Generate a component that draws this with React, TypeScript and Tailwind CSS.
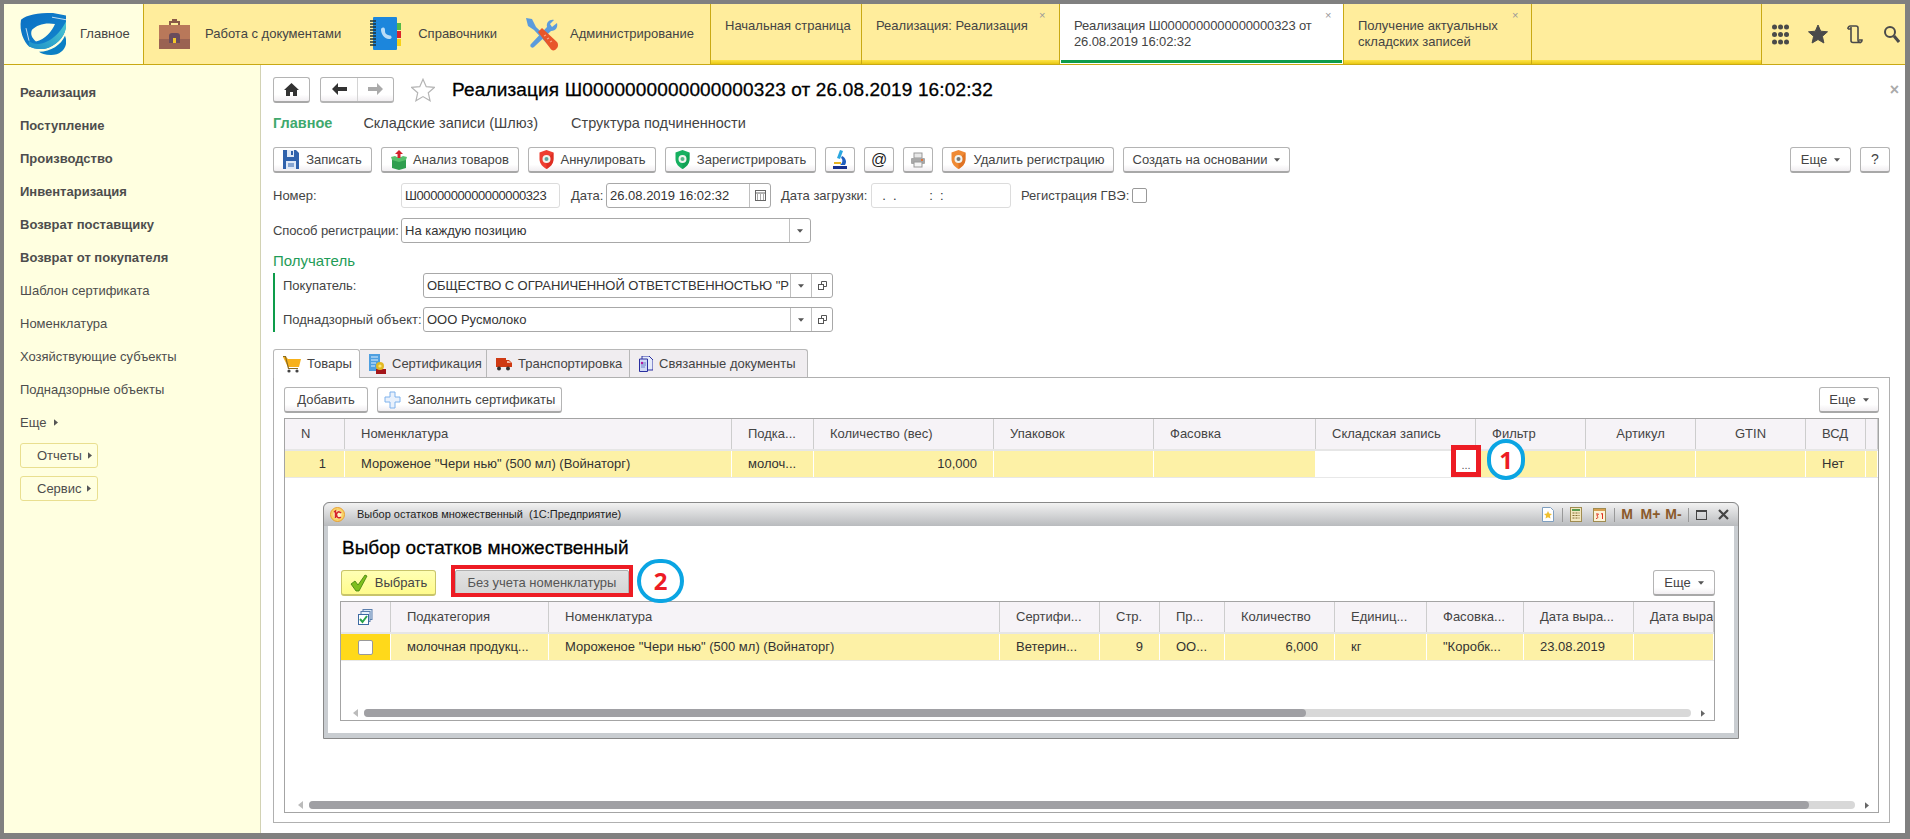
import React from "react";

const Tri = ({ right = false, c = "#555" }: { right?: boolean; c?: string }) =>
  right ? (
    <svg width="4" height="7" viewBox="0 0 5 8" className="shrink-0"><path d="M0 0l5 4-5 4z" fill={c} /></svg>
  ) : (
    <svg width="6" height="4" viewBox="0 0 7 4" className="shrink-0"><path d="M0 0h7L3.5 4z" fill={c} /></svg>
  );

const Logo = () => (
  <svg width="47" height="42" viewBox="0 0 47 50" preserveAspectRatio="none">
    <defs>
      <linearGradient id="lg1" x1="0" y1="0" x2="1" y2="1"><stop offset="0" stopColor="#0a6fc4" /><stop offset="1" stopColor="#1487cc" /></linearGradient>
      <linearGradient id="lg2" x1="0" y1="1" x2="1" y2="0"><stop offset="0" stopColor="#1e90c8" /><stop offset="1" stopColor="#4cc8d2" /></linearGradient>
    </defs>
    <path fillRule="evenodd" d="M2 8C8 2 18 0 34 0l13 3v11c0 12-7 22-17 27-8 4-16 1-20-1C5 34 0 22 2 8zM13 20c5-6 13-9 23-7-3 9-10 18-19 21-4-4-6-9-4-14z" fill="url(#lg1)" />
    <path d="M10 33c4 5 12 5 18 1 8-5 15-14 19-24v5c0 11-7 21-17 26-8 4-16 1-20-1z" fill="url(#lg2)" />
    <path d="M47 8L33 5M10 33L7 18" stroke="#fff" strokeWidth=".8" fill="none" />
    <path d="M46 27c4 11-2 23-14 23-6 0-10-2-12-4 12 0 22-8 26-19z" fill="#0b7fc4" />
  </svg>
);

const Briefcase = () => (
  <svg width="33" height="33" viewBox="0 0 33 33">
    <path d="M11 7V3h3V1h5v2h3v4h-2V5h-7v2z" fill="#8a5a48" />
    <path d="M1 7h31v14H1z" fill="#b9785a" />
    <path d="M1 21h31v10H1z" fill="#9a6252" />
    <path d="M11 18a3 3 0 013-3h5a3 3 0 013 3v7H11z" fill="#6a4c5c" />
    <rect x="15" y="20" width="3" height="5" fill="#f4c72a" />
  </svg>
);

const Book = () => (
  <svg width="33" height="34" viewBox="0 0 33 34">
    <rect x="3" y="0" width="24" height="33" rx="1" fill="#1c86dc" />
    <path d="M0 4h6M0 7h6M0 10h6M0 13h6M0 16h6M0 19h6M0 22h6M0 25h6M0 28h6" stroke="#233" strokeWidth="1.4" />
    <rect x="27" y="6" width="4" height="7" fill="#54b948" />
    <rect x="27" y="14" width="4" height="7" fill="#d9232e" />
    <rect x="27" y="22" width="4" height="7" fill="#f7d117" />
    <path d="M12 11c2-1 3 0 3 2s0 4 3 5 2 0 3 1 1 3-2 3c-5 0-8-6-8-9 0-1 0-2 1-2z" fill="#b9dcf7" />
  </svg>
);

const Tools = () => (
  <svg width="34" height="34" viewBox="0 0 34 34">
    <path d="M1 1l6 1 4 8 18 17-3 4L9 13 3 9z" fill="#5b9bdc" />
    <path d="M32 6c1 4-1 8-6 8L9 30c-2 2-5-1-3-3l16-17c-1-5 3-8 7-7l-4 4 2 3z" fill="#5b9bdc" />
    <path d="M13 15l4-4 15 14c2 3 1 6-2 8-2 1-4 0-5-2z" fill="#e8562a" />
    <path d="M19 19l2-1M22 22l2-1M25 25l2-1" stroke="#f9a98c" strokeWidth="1.2" />
  </svg>
);

const Floppy = () => (
  <svg width="16" height="19" viewBox="0 0 16 19">
    <path d="M0 0h13l3 3v16H0z" fill="#2f62ac" />
    <rect x="4" y="0" width="7" height="7" fill="#dfe9f7" />
    <rect x="8" y="1" width="2" height="4" fill="#2f62ac" />
    <rect x="3" y="11" width="10" height="8" fill="#dfe9f7" />
    <path d="M5 14h6M5 16h6" stroke="#2f62ac" />
  </svg>
);

const BoxIcon = () => (
  <svg width="16" height="20" viewBox="0 0 16 20">
    <path d="M1 9l7 2 7-2v9l-7 2-7-2z" fill="#2f9e4f" />
    <path d="M0 7l4-1 4 2 4-2 4 1-1 3-7 2-7-2z" fill="#58c06c" />
    <path d="M8 0l4 4H9.5v4h-3V4H4z" fill="#d3202a" />
  </svg>
);

const Shield = ({ a, b, dot }: { a: string; b: string; dot: string }) => (
  <svg width="15" height="19" viewBox="0 0 15 19">
    <path d="M7.500 0l7 2.500V9c0 5-3.500 8-7 10-3.500-2-7-5-7-10V2.500z" fill={a} />
    <path d="M7.500 10L14.500 2.500V9c0 5-3.500 8-7 10z" fill={b} opacity=".7" />
    <circle cx="7.500" cy="9" r="4" fill="#f1f4ee" />
    <circle cx="7.500" cy="9" r="2" fill={dot} />
  </svg>
);

const Microscope = () => (
  <svg width="16" height="20" viewBox="0 0 16 20">
    <path d="M8 0l3 1-3 8-3-1z" fill="#2aa7e0" />
    <path d="M10 6c4 2 5 6 3 9H8c3-2 3-6 1-7z" fill="#1f5fbf" />
    <path d="M2 12h7v2H2z" fill="#e6b422" />
    <path d="M1 16h14v3H1z" fill="#15318f" />
  </svg>
);

const Printer = () => (
  <svg width="16" height="16" viewBox="0 0 16 16">
    <rect x="4" y="1" width="8" height="5" fill="#e8e8e8" stroke="#999" />
    <rect x="1" y="6" width="14" height="6" rx="1" fill="#a8a8a8" />
    <rect x="4" y="10" width="8" height="5" fill="#f4f4f4" stroke="#999" />
    <rect x="11" y="7" width="2" height="2" fill="#e2743a" />
  </svg>
);

const Cart = () => (
  <svg width="18" height="17" viewBox="0 0 18 17">
    <path d="M0 1h3l2 2h13l-2 8H5z" fill="#f7b11a" />
    <path d="M0 0h3l3 12h9v1H5L2 1H0z" fill="#8a6a20" />
    <circle cx="6" cy="15" r="1.600" fill="#444" />
    <circle cx="14" cy="15" r="1.600" fill="#444" />
  </svg>
);

const Cert = () => (
  <svg width="17" height="20" viewBox="0 0 17 20">
    <path d="M0 0h11v17H0z" fill="#4f9fe0" />
    <path d="M2 3h7M2 6h7M2 9h5M2 12h4" stroke="#dff0ff" />
    <rect x="7" y="15" width="10" height="5" fill="#a4161a" />
    <circle cx="11" cy="12" r="4" fill="#e3b923" />
    <circle cx="11" cy="12" r="1.600" fill="#fbe77d" />
  </svg>
);

const Truck = () => (
  <svg width="16" height="14" viewBox="0 0 16 14">
    <rect x="0" y="1" width="10" height="9" fill="#cf3a13" />
    <path d="M10 3h3l3 3v4h-6z" fill="#cf3a13" />
    <path d="M11 4h2l2 2h-4z" fill="#f3b7a0" />
    <circle cx="3" cy="11.500" r="2" fill="#333" />
    <circle cx="12" cy="11.500" r="2" fill="#333" />
  </svg>
);

const Docs = () => (
  <svg width="14" height="16" viewBox="0 0 14 16">
    <path d="M3 0h7l4 4v10H3z" fill="#e6ecfa" stroke="#2a2fa0" />
    <path d="M0.500 3h8v12.500h-8z" fill="#cfd9f5" stroke="#2a2fa0" />
    <path d="M2 7h5M2 9h5M2 11h4" stroke="#6b7fc9" />
    <circle cx="3" cy="7" r="1.200" fill="#b5179e" />
  </svg>
);

const PlusOutline = () => (
  <svg width="17" height="18" viewBox="0 0 17 18">
    <path d="M6 1h5v5h5v5h-5v6H6v-6H1V6h5z" fill="#e9f1fc" stroke="#7fb2ec" strokeLinejoin="round" />
  </svg>
);

const Check = () => (
  <svg width="18" height="18" viewBox="0 0 18 18">
    <path d="M1 10l4-3 3 4 7-10 2 1-8 15H6z" fill="#7fbf1f" stroke="#3e7d0a" strokeWidth=".8" />
  </svg>
);

const CheckStack = () => (
  <svg width="15" height="16" viewBox="0 0 15 16">
    <rect x="5" y="0.500" width="9" height="10" fill="#dbe7f5" stroke="#5b7fae" />
    <rect x="3" y="2.500" width="9" height="10" fill="#eaf1fa" stroke="#5b7fae" />
    <rect x="0.500" y="5.500" width="10" height="10" fill="#fff" stroke="#3d6aa3" />
    <path d="M2 10l2.500 3L9 7" fill="none" stroke="#2aa34a" strokeWidth="2" />
  </svg>
);

const Calendar = () => (
  <svg width="11" height="11" viewBox="0 0 11 11">
    <rect x="0.500" y="0.500" width="10" height="10" fill="#fff" stroke="#666" />
    <path d="M0 3h11" stroke="#666" />
    <path d="M2 5h1M5 5h1M8 5h1M2 7h1M5 7h1M8 7h1M2 9h1M5 9h1M8 9h1" stroke="#555" />
  </svg>
);

const Copy = () => (
  <svg width="9" height="9" viewBox="0 0 9 9">
    <rect x="0.500" y="3.500" width="5" height="5" fill="#fff" stroke="#555" />
    <path d="M3.500 3V0.500h5v5H6" fill="none" stroke="#555" />
  </svg>
);

const GridDots = () => (
  <svg width="17" height="21" viewBox="0 0 17 21">
    {[3, 10.500, 18].map((y) => [2.500, 8.500, 14.500].map((x) => <circle key={`${x}-${y}`} cx={x} cy={y} r="2.500" fill="#4a4a4a" />))}
  </svg>
);

const Star = ({ fill, stroke, size = 20 }: { fill: string; stroke: string; size?: number }) => (
  <svg width={size} height={size} viewBox="0 0 20 20">
    <path d="M10 1l2.700 6.200 6.800.6-5.100 4.500 1.500 6.700L10 15.500 4.100 19l1.500-6.700L.5 7.800l6.800-.6z" fill={fill} stroke={stroke} />
  </svg>
);

const Scroll = () => (
  <svg width="16" height="19" viewBox="0 0 16 19" fill="none" stroke="#4a4a4a" strokeWidth="1.600">
    <path d="M1 4a2.500 2.500 0 012.500-3H9a2 2 0 012 2v12a2.500 2.500 0 002.500 2.500A2.500 2.500 0 0015 15h-3" />
    <path d="M1 4h3M13.500 17.500H6a2 2 0 01-2-2V2" />
  </svg>
);

const Search = () => (
  <svg width="17" height="18" viewBox="0 0 17 18">
    <circle cx="7" cy="7" r="5" fill="none" stroke="#4a4a4a" strokeWidth="2" />
    <path d="M11 11l5 6" stroke="#4a4a4a" strokeWidth="3" />
  </svg>
);

const Logo1C = () => (
  <svg width="15" height="15" viewBox="0 0 15 15">
    <circle cx="7.500" cy="7.500" r="7" fill="#f9d36a" stroke="#e8a030" />
    <circle cx="7.500" cy="7.500" r="4" fill="#fff3c4" />
    <path d="M4 5l1.500-1v7M11 6a2.500 3 0 10-.2 4" fill="none" stroke="#d4232a" strokeWidth="1.500" />
  </svg>
);

const Btn = ({ w, children, center = true }: { w: string; children: React.ReactNode; center?: boolean }) => (
  <button className={`${w} h-[26px] shrink-0 flex items-center ${center ? "justify-center" : ""} rounded-[3px] border border-[#b4b4b4] border-b-[2px] border-b-[#a8a8a8] bg-gradient-to-b from-white from-[72%] to-[#f1eef1] text-[13px] text-[#444]`}>
    {children}
  </button>
);

const Fld = ({ w, v, light = false, cls = "", children }: { w: string; v?: string; light?: boolean; cls?: string; children?: React.ReactNode }) => (
  <div className={`${w} h-[25px] shrink-0 flex items-center rounded-[3px] border ${light ? "border-[#dcdcdc]" : "border-[#a8a8a8]"} bg-white text-[13px] text-[#333]`}>
    <div className={`flex-1 min-w-0 pl-[3px] whitespace-pre overflow-hidden ${cls}`}>{v}</div>
    {children}
  </div>
);

const Sep = ({ w, children }: { w: string; children: React.ReactNode }) => (
  <div className={`${w} h-full shrink-0 flex items-center justify-center border-l border-[#c0c0c0]`}>{children}</div>
);

const mainCols = [
  { w: "w-[60px]", h: "N", hc: "pl-[16px]", r: "1", rc: "justify-end pr-[18px]" },
  { w: "w-[387px]", h: "Номенклатура", hc: "pl-[16px]", r: 'Мороженое "Чери нью" (500 мл) (Войнаторг)', rc: "pl-[16px]" },
  { w: "w-[82px]", h: "Подка...", hc: "pl-[16px]", r: "молоч...", rc: "pl-[16px]" },
  { w: "w-[180px]", h: "Количество (вес)", hc: "pl-[16px]", r: "10,000", rc: "justify-end pr-[16px]" },
  { w: "w-[160px]", h: "Упаковок", hc: "pl-[16px]", r: "", rc: "" },
  { w: "w-[162px]", h: "Фасовка", hc: "pl-[16px]", r: "", rc: "" },
  { w: "w-[160px]", h: "Складская запись", hc: "pl-[16px]", r: "", rc: "bg-white" },
  { w: "w-[110px]", h: "Фильтр", hc: "pl-[16px]", r: "", rc: "" },
  { w: "w-[110px]", h: "Артикул", hc: "justify-center", r: "", rc: "" },
  { w: "w-[110px]", h: "GTIN", hc: "justify-center", r: "", rc: "" },
  { w: "w-[60px]", h: "ВСД", hc: "pl-[16px]", r: "Нет", rc: "pl-[16px]" },
  { w: "flex-1", h: "", hc: "", r: "", rc: "" },
];

const winCols = [
  { w: "w-[50px]", h: "", hc: "justify-center", r: "", rc: "bg-[#ffd91a] justify-center" },
  { w: "w-[158px]", h: "Подкатегория", hc: "pl-[16px]", r: "молочная продукц...", rc: "pl-[16px]" },
  { w: "w-[451px]", h: "Номенклатура", hc: "pl-[16px]", r: 'Мороженое "Чери нью" (500 мл) (Войнаторг)', rc: "pl-[16px]" },
  { w: "w-[100px]", h: "Сертифи...", hc: "pl-[16px]", r: "Ветерин...", rc: "pl-[16px]" },
  { w: "w-[60px]", h: "Стр.", hc: "pl-[16px]", r: "9", rc: "justify-end pr-[16px]" },
  { w: "w-[65px]", h: "Пр...", hc: "pl-[16px]", r: "ОО...", rc: "pl-[16px]" },
  { w: "w-[110px]", h: "Количество", hc: "pl-[16px]", r: "6,000", rc: "justify-end pr-[16px]" },
  { w: "w-[92px]", h: "Единиц...", hc: "pl-[16px]", r: "кг", rc: "pl-[16px]" },
  { w: "w-[97px]", h: "Фасовка...", hc: "pl-[16px]", r: '"Коробк...', rc: "pl-[16px]" },
  { w: "w-[110px]", h: "Дата выра...", hc: "pl-[16px]", r: "23.08.2019", rc: "pl-[16px]" },
  { w: "flex-1", h: "Дата выра", hc: "pl-[16px]", r: "", rc: "" },
];

type Col = { w: string; h: string; hc: string; r: string; rc: string };

const Table = ({ cols, extra, rowIcon, headIcon }: { cols: Col[]; extra: string; rowIcon?: React.ReactNode; headIcon?: React.ReactNode }) => (
  <div className={`${extra} flex flex-col border border-[#a4a4a4] bg-white text-[13px] text-[#444] overflow-hidden`}>
    <div className="h-[30px] flex bg-[#f6f3f7] border-b-0 shrink-0">
      {cols.map((c, i) => (
        <div key={i} className={`${c.w} ${c.hc} min-w-0 flex items-center whitespace-nowrap overflow-hidden border-r border-[#cdcdcd]`}>
          {i === 0 && headIcon ? headIcon : c.h}
        </div>
      ))}
    </div>
    <div className="h-[2px] shrink-0 bg-[#e6e6e6]" />
    <div className="h-[26px] flex bg-[#fdf1a6] shrink-0 text-[#333]">
      {cols.map((c, i) => (
        <div key={i} className={`${c.w} ${c.rc} min-w-0 flex items-center whitespace-nowrap overflow-hidden border-r border-white`}>
          {i === 0 && rowIcon ? rowIcon : c.r}
        </div>
      ))}
    </div>
    <div className="h-[1px] shrink-0 bg-[#e8e8e8]" />
    <div className="flex-1" />
  </div>
);

const HBar = ({ pad, thumb, outer }: { pad: string; thumb: string; outer: string }) => (
  <div className={`${outer} flex items-center`}>
    <div className={`${pad} flex items-center justify-end pr-[6px]`}>
      <svg width="5" height="8" viewBox="0 0 5 8"><path d="M5 0L0 4l5 4z" fill="#bbb" /></svg>
    </div>
    <div className="flex-1 h-[8px] rounded-full bg-[#d8d8d8]">
      <div className={`${thumb} h-full rounded-full bg-[#a0a0a4]`} />
    </div>
    <div className="w-[23px] flex justify-center"><Tri right c="#666" /></div>
  </div>
);

export default function App() {
  return (
    <div className="relative w-[1910px] h-[839px] overflow-hidden bg-[#808080] pt-[4px] pl-[4px] pr-[5px] pb-[6px] flex flex-col font-['Liberation_Sans',Arial,sans-serif] text-[13px] text-[#444]">
      {/* Top bar */}
      <div className="h-[61px] shrink-0 flex border-b border-[#c9a914] bg-[#ffed9c]">
        <div className="w-[140px] shrink-0 flex items-center bg-[#ffffe0] border-r border-[#c9a914] pl-[15px]">
          <Logo />
          <span className="ml-[14px] text-[#444]">Главное</span>
        </div>
        <div className="w-[567px] shrink-0 flex items-center pl-[14px] border-r border-[#c9a914]">
          <Briefcase />
          <span className="ml-[14px] whitespace-nowrap">Работа с документами</span>
          <div className="ml-[29px]"><Book /></div>
          <span className="ml-[15px] whitespace-nowrap">Справочники</span>
          <div className="ml-[28px]"><Tools /></div>
          <span className="ml-[11px] whitespace-nowrap">Администрирование</span>
        </div>
        <div className="w-[151px] shrink-0 relative border-r border-[#c9a914] pl-[14px] pt-[14px] leading-[16px] whitespace-nowrap">
          Начальная страница
          <div className="absolute left-0 right-0 bottom-0 h-[4px] bg-gradient-to-b from-[#ffe343] to-[#e8c80c]" />
        </div>
        <div className="w-[198px] shrink-0 relative border-r border-[#c9a914] pl-[14px] pt-[14px] leading-[16px] whitespace-nowrap">
          Реализация: Реализация
          <span className="absolute left-[177px] top-[5px] text-[11px] leading-[12px] text-[#999]">×</span>
          <div className="absolute left-0 right-0 bottom-0 h-[4px] bg-gradient-to-b from-[#ffe343] to-[#e8c80c]" />
        </div>
        <div className="w-[284px] shrink-0 relative bg-white border-r border-[#c9a914] pl-[14px] pt-[14px] leading-[16px]">
          <div className="w-[250px] tracking-[-0.12px]">Реализация Ш0000000000000000323 от 26.08.2019 16:02:32</div>
          <span className="absolute left-[265px] top-[5px] text-[11px] leading-[12px] text-[#999]">×</span>
          <div className="absolute left-[1px] right-[1px] bottom-[1px] h-[3px] bg-[#0d9c4a]" />
        </div>
        <div className="w-[188px] shrink-0 relative border-r border-[#c9a914] pl-[14px] pt-[14px] leading-[16px]">
          <div className="w-[160px]">Получение актуальных складских записей</div>
          <span className="absolute left-[168px] top-[5px] text-[11px] leading-[12px] text-[#999]">×</span>
          <div className="absolute left-0 right-0 bottom-0 h-[4px] bg-gradient-to-b from-[#ffe343] to-[#e8c80c]" />
        </div>
        <div className="w-[230px] shrink-0 relative border-r border-[#c9a914]">
          <div className="absolute left-0 right-0 bottom-0 h-[4px] bg-gradient-to-b from-[#ffe343] to-[#e8c80c]" />
        </div>
        <div className="flex-1 flex items-center">
          <div className="w-[37px] flex justify-center"><GridDots /></div>
          <div className="w-[37px] flex justify-center"><Star fill="#4a4a4a" stroke="#4a4a4a" /></div>
          <div className="w-[37px] flex justify-center"><Scroll /></div>
          <div className="w-[37px] flex justify-center"><Search /></div>
        </div>
      </div>

      <div className="flex-1 flex min-h-0">
        {/* Sidebar */}
        <div className="w-[257px] shrink-0 bg-[#ffffe0] border-r border-[#d2d2b4] pt-[11px] pl-[16px]">
          {["Реализация", "Поступление", "Производство", "Инвентаризация", "Возврат поставщику", "Возврат от покупателя"].map((t) => (
            <div key={t} className="h-[33px] flex items-center font-bold text-[#4d4d4d]">{t}</div>
          ))}
          {["Шаблон сертификата", "Номенклатура", "Хозяйствующие субъекты", "Поднадзорные объекты"].map((t) => (
            <div key={t} className="h-[33px] flex items-center text-[#4d4d4d]">{t}</div>
          ))}
          <div className="h-[33px] flex items-center gap-[8px] text-[#4d4d4d]">Еще <Tri right /></div>
          <div className="mt-[4px] w-[78px] h-[25px] flex items-center pl-[16px] gap-[6px] border border-[#e9df90] rounded-[3px] text-[#4d4d4d]">Отчеты <Tri right /></div>
          <div className="mt-[8px] w-[78px] h-[25px] flex items-center pl-[16px] gap-[5px] border border-[#e9df90] rounded-[3px] text-[#4d4d4d]">Сервис <Tri right /></div>
        </div>

        {/* Main */}
        <div className="flex-1 min-w-0 flex flex-col bg-white pl-[12px] pr-[15px]">
          <div className="mt-[12px] h-[25px] shrink-0 flex items-center">
            <Btn w="w-[37px]">
              <svg width="15" height="13" viewBox="0 0 15 13"><path d="M7.500 0L15 7h-2v6H9V9H6v4H2V7H0z" fill="#333" /></svg>
            </Btn>
            <div className="ml-[10px] w-[74px] h-[26px] flex rounded-[3px] border border-[#b4b4b4] border-b-[2px] bg-gradient-to-b from-white from-[72%] to-[#f1eef1]">
              <div className="w-[37px] flex items-center justify-center border-r border-[#d4d4d4]">
                <svg width="15" height="12" viewBox="0 0 15 12"><path d="M6 0v4h9v4H6v4L0 6z" fill="#333" /></svg>
              </div>
              <div className="flex-1 flex items-center justify-center">
                <svg width="15" height="12" viewBox="0 0 15 12"><path d="M9 0v4H0v4h9v4l6-6z" fill="#aaa" /></svg>
              </div>
            </div>
            <div className="ml-[17px]"><Star fill="#fff" stroke="#b4b4b4" size={24} /></div>
            <div className="ml-[17px] mt-[2px] text-[19px] tracking-[0.15px] text-black whitespace-nowrap [-webkit-text-stroke:0.3px_black]">Реализация Ш0000000000000000323 от 26.08.2019 16:02:32</div>
            <div className="ml-auto mr-[-9px] text-[16px] font-bold leading-none text-[#aaa]">×</div>
          </div>

          <div className="mt-[12px] h-[20px] shrink-0 flex items-center text-[14.5px]">
            <span className="font-bold text-[#3fa96d]">Главное</span>
            <span className="ml-[31px]">Складские записи (Шлюз)</span>
            <span className="ml-[33px]">Структура подчиненности</span>
          </div>

          <div className="mt-[13px] h-[26px] shrink-0 flex gap-[9px]">
            <Btn w="w-[99px]"><Floppy /><span className="ml-[7px]">Записать</span></Btn>
            <Btn w="w-[138px]"><BoxIcon /><span className="ml-[6px]">Анализ товаров</span></Btn>
            <Btn w="w-[128px]"><Shield a="#ee3e31" b="#d7281e" dot="#5fa6a0" /><span className="ml-[7px]">Аннулировать</span></Btn>
            <Btn w="w-[151px]"><Shield a="#16b060" b="#0e9c50" dot="#54b787" /><span className="ml-[7px]">Зарегистрировать</span></Btn>
            <Btn w="w-[30px]"><Microscope /></Btn>
            <Btn w="w-[30px]"><span className="text-[16px] text-[#222]">@</span></Btn>
            <Btn w="w-[30px]"><Printer /></Btn>
            <Btn w="w-[172px]"><Shield a="#ef8a34" b="#d9691e" dot="#777" /><span className="ml-[7px]">Удалить регистрацию</span></Btn>
            <Btn w="w-[167px]"><span>Создать на основании</span><span className="ml-[7px]"><Tri /></span></Btn>
            <div className="ml-auto flex gap-[9px] mr-[0px]">
              <Btn w="w-[61px]"><span>Еще</span><span className="ml-[7px]"><Tri /></span></Btn>
              <Btn w="w-[30px]"><span className="text-[14px]">?</span></Btn>
            </div>
          </div>

          <div className="mt-[10px] h-[25px] shrink-0 flex items-center">
            <span className="w-[128px] shrink-0">Номер:</span>
            <Fld w="w-[159px]" v="Ш0000000000000000323" light cls="tracking-[-0.4px]" />
            <span className="ml-[11px] w-[35px] shrink-0">Дата:</span>
            <Fld w="w-[165px]" v="26.08.2019 16:02:32"><Sep w="w-[21px]"><Calendar /></Sep></Fld>
            <span className="ml-[10px] w-[90px] shrink-0 whitespace-nowrap">Дата загрузки:</span>
            <Fld w="w-[140px]" v="  .  .         :  :" light />
            <span className="ml-[10px] w-[111px] shrink-0 whitespace-nowrap">Регистрация ГВЭ:</span>
            <div className="w-[15px] h-[15px] rounded-[2px] border border-[#999] bg-white" />
          </div>

          <div className="mt-[10px] h-[25px] shrink-0 flex items-center">
            <span className="w-[128px] shrink-0 whitespace-nowrap tracking-[-0.1px]">Способ регистрации:</span>
            <Fld w="w-[410px]" v="На каждую позицию"><Sep w="w-[21px]"><Tri /></Sep></Fld>
          </div>

          <div className="mt-[8px] h-[20px] shrink-0 flex items-center text-[15px] text-[#1f9c57]">Получатель</div>

          <div className="mt-[2px] w-[640px] shrink-0 flex flex-col gap-[9px] border-l-2 border-[#0d9c4a] pl-[8px]">
            <div className="h-[25px] flex items-center">
              <span className="w-[140px] shrink-0">Покупатель:</span>
              <Fld w="w-[410px]" cls="tracking-[-0.07px]" v={'ОБЩЕСТВО С ОГРАНИЧЕННОЙ ОТВЕТСТВЕННОСТЬЮ "Р'}>
                <Sep w="w-[21px]"><Tri /></Sep>
                <Sep w="w-[21px]"><Copy /></Sep>
              </Fld>
            </div>
            <div className="h-[25px] flex items-center">
              <span className="w-[140px] shrink-0 whitespace-nowrap">Поднадзорный объект:</span>
              <Fld w="w-[410px]" v="ООО Русмолоко">
                <Sep w="w-[21px]"><Tri /></Sep>
                <Sep w="w-[21px]"><Copy /></Sep>
              </Fld>
            </div>
          </div>

          {/* Tabs */}
          <div className="mt-[17px] h-[29px] shrink-0 flex border-b border-[#b0b0b0] text-[13px]">
            <div className="w-[87px] h-[29px] flex items-center pl-[9px] gap-[6px] bg-white border border-[#b8b8b8] border-b-0 rounded-t-[3px] z-10"><Cart /><span>Товары</span></div>
            <div className="w-[127px] flex items-center pl-[9px] gap-[6px] bg-[#f0edf0] border-t border-r border-[#b8b8b8]"><Cert /><span>Сертификация</span></div>
            <div className="w-[143px] flex items-center pl-[9px] gap-[6px] bg-[#f0edf0] border-t border-r border-[#b8b8b8]"><Truck /><span>Транспортировка</span></div>
            <div className="w-[178px] flex items-center pl-[9px] gap-[6px] bg-[#f0edf0] border-t border-r border-[#b8b8b8] rounded-tr-[3px]"><Docs /><span>Связанные документы</span></div>
          </div>

          <div className="flex-1 min-h-0 flex flex-col border-l border-r border-b border-[#b0b0b0] px-[10px] pt-[9px] pb-[9px]">
            <div className="h-[26px] shrink-0 flex gap-[9px]">
              <Btn w="w-[84px]">Добавить</Btn>
              <Btn w="w-[185px]"><PlusOutline /><span className="ml-[7px]">Заполнить сертификаты</span></Btn>
              <div className="ml-auto"><Btn w="w-[60px]"><span>Еще</span><span className="ml-[7px]"><Tri /></span></Btn></div>
            </div>
            <div className="relative mt-[5px] flex-1 min-h-0 flex flex-col">
              <Table cols={mainCols} extra="flex-1 min-h-0" />
              <HBar outer="absolute left-[1px] right-[1px] bottom-[3px] h-[10px]" pad="w-[24px]" thumb="w-[97%]" />
            </div>
          </div>
          <div className="h-[10px] shrink-0" />
        </div>
      </div>

      {/* Floating window */}
      <div className="absolute left-[323px] top-[502px] w-[1416px] h-[237px] flex flex-col rounded-t-[6px] border border-[#888] bg-[#c9cdd1]">
        <div className="h-[23px] shrink-0 flex items-center rounded-t-[6px] bg-gradient-to-b from-[#f2f2f2] to-[#b9bbbe] pl-[6px] text-[11px] text-[#222]">
          <Logo1C />
          <span className="ml-[12px] whitespace-pre">Выбор остатков множественный  (1С:Предприятие)</span>
          <div className="ml-auto flex items-center h-full pr-[5px]">
            <div className="w-[20px] flex justify-center">
              <svg width="12" height="15" viewBox="0 0 12 15"><path d="M0.500 0.500h8l3 3v11h-11z" fill="#fff" stroke="#7f9fc0" /><path d="M6 4l1.200 2.600 2.800.3-2.100 1.900.6 2.800L6 10.200l-2.500 1.400.6-2.800L2 6.900l2.800-.3z" fill="#f0c030" /></svg>
            </div>
            <div className="ml-[4px] mr-[3px] w-px h-[14px] bg-[#999]" />
            <div className="w-[20px] flex justify-center">
              <svg width="12" height="15" viewBox="0 0 12 15"><rect x="0.500" y="0.500" width="11" height="14" fill="#f3e7c0" stroke="#a08c50" /><rect x="2" y="2" width="8" height="2" fill="#5a9a50" /><path d="M2.500 6h2M5.500 6h2M8.500 6h1M2.500 8.500h2M5.500 8.500h2M8.500 8.500h1M2.500 11h2M5.500 11h2M8.500 11h1" stroke="#806a30" /></svg>
            </div>
            <div className="ml-[3px] w-[20px] flex justify-center">
              <svg width="13" height="15" viewBox="0 0 13 15"><rect x="0.500" y="1.500" width="12" height="13" fill="#fbf3d8" stroke="#a08c50" /><rect x="1" y="2" width="11" height="2" fill="#d9a050" /><path d="M3 7h2.500L3.800 9c1.500 0 1.700 2.500-.8 2.500M8 7l1.500-.5V12" fill="none" stroke="#e03020" /></svg>
            </div>
            <div className="ml-[5px] mr-[2px] w-px h-[14px] bg-[#999]" />
            <div className="w-[20px] text-center text-[14px] font-bold text-[#8a5a2b]">M</div>
            <div className="ml-[2px] w-[23px] text-center text-[14px] font-bold text-[#8a5a2b]">M+</div>
            <div className="ml-[1px] w-[21px] text-center text-[14px] font-bold text-[#8a5a2b]">M-</div>
            <div className="ml-[4px] mr-[2px] w-px h-[14px] bg-[#999]" />
            <div className="w-[21px] flex justify-center"><div className="w-[11px] h-[10px] border border-[#444] border-t-2" /></div>
            <div className="ml-[1px] w-[20px] flex justify-center">
              <svg width="11" height="11" viewBox="0 0 11 11"><path d="M1 1l9 9M10 1l-9 9" stroke="#444" strokeWidth="2.200" /></svg>
            </div>
          </div>
        </div>
        <div className="flex-1 min-h-0 flex flex-col mx-[4px] mb-[5px] bg-white pl-[12px] pr-[19px]">
          <div className="mt-[10px] h-[24px] pl-[2px] shrink-0 flex items-center text-[19px] text-black [-webkit-text-stroke:0.3px_black]">Выбор остатков множественный</div>
          <div className="mt-[10px] h-[26px] shrink-0 flex">
            <button className="ml-[1px] w-[95px] h-[26px] flex items-center justify-center rounded-[3px] border border-[#c8c46a] border-b-[2px] bg-gradient-to-b from-[#ffffb4] to-[#fffb8c] text-[13px] text-[#444]"><Check /><span className="ml-[7px]">Выбрать</span></button>
            <button className="ml-[19px] w-[174px] h-[26px] flex items-center justify-center rounded-[2px] border border-[#b0b0b0] bg-gradient-to-b from-[#e2e2e2] to-[#d4d4d4] text-[13px] text-[#555]">Без учета номенклатуры</button>
            <div className="ml-auto"><Btn w="w-[62px]"><span>Еще</span><span className="ml-[7px]"><Tri /></span></Btn></div>
          </div>
          <div className="relative mt-[5px] h-[120px] shrink-0 flex flex-col">
            <Table
              cols={winCols}
              extra="flex-1 min-h-0"
              headIcon={<CheckStack />}
              rowIcon={<div className="w-[15px] h-[15px] rounded-[2px] border border-[#999] bg-white" />}
            />
            <HBar outer="absolute left-[1px] right-[1px] bottom-[3px] h-[10px]" pad="w-[23px]" thumb="w-[71%]" />
          </div>
        </div>
      </div>

      {/* Annotations */}
      <div className="absolute left-[1451px] top-[445px] w-[30px] h-[32px] flex items-end justify-center border-[5px] border-[#ed1c24] bg-white text-[11px] leading-[14px] text-[#555]">...</div>
      <div className="absolute left-[1487px] top-[439px] w-[38px] h-[41px] flex items-center justify-center rounded-full border-[4px] border-[#0ba5e3] bg-white text-[24px] font-bold text-[#ed1c24] font-['Open_Sans',sans-serif]">1</div>
      <div className="absolute left-[451px] top-[565px] w-[182px] h-[32px] border-[4px] border-[#ed1c24]" />
      <div className="absolute left-[637px] top-[559px] w-[47px] h-[44px] flex items-center justify-center rounded-full border-[4px] border-[#0ba5e3] bg-white text-[24px] font-bold text-[#ed1c24] font-['Open_Sans',sans-serif]">2</div>
    </div>
  );
}
